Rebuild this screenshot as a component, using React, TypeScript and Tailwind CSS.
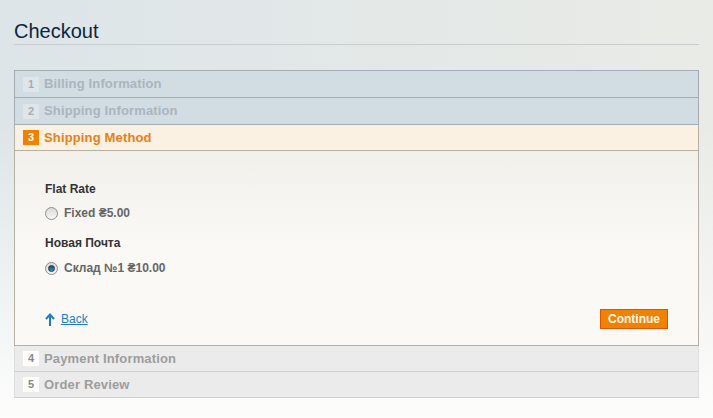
const font = { fontFamily: '"Liberation Sans", "DejaVu Sans", Arial, sans-serif' }

type Step = { n: number; title: string }

const done: Step[] = [
  { n: 1, title: 'Billing Information' },
  { n: 2, title: 'Shipping Information' },
]

const todo: Step[] = [
  { n: 4, title: 'Payment Information' },
  { n: 5, title: 'Order Review' },
]

function Radio({ checked }: { checked?: boolean }) {
  return (
    <span className="w-[13px] h-[13px] rounded-full border border-[#8f8f8f] bg-gradient-to-b from-[#d9d9d9] to-[#f7f7f7] flex items-center justify-center shrink-0">
      {checked && (
        <span className="w-[7px] h-[7px] rounded-full bg-gradient-to-b from-[#1b4f6b] to-[#3d8fb8] border border-[#143a52]" />
      )}
    </span>
  )
}

export default function App() {
  return (
    <div style={font} className="w-[713px] h-[418px] overflow-hidden bg-gradient-to-r from-[#dde5e9] to-[#e9ebe6]">
      <div className="h-full px-[14px] bg-gradient-to-b from-transparent via-transparent via-30% to-[#fdfdfc]">
        {/* Page title */}
        <div className="pt-[19px] pb-[1px] border-b border-[#c9cdcd]">
          <h1 className="text-[20px] leading-[24px] text-[#0a263c]">Checkout</h1>
        </div>

        {/* Steps */}
        <div className="mt-[25px]">
          {done.map((s, i) => (
            <div
              key={s.n}
              className={`h-[27px] flex items-center pl-[8px] bg-[#d1dce3] border-x border-b border-[#a5adb2] ${i === 0 ? 'border-t h-[28px]' : ''}`}
            >
              <span className="w-[16px] h-[15px] bg-[#dfe6ea] text-[#a3aeb5] text-[11px] font-bold flex items-center justify-center">
                {s.n}
              </span>
              <span className="ml-[5px] text-[13px] tracking-[0.15px] font-bold text-[#a9b5be]">{s.title}</span>
            </div>
          ))}

          {/* Active step */}
          <div className="h-[26px] flex items-center pl-[8px] bg-[#faf1e2] border-x border-b border-[#b8afa4]">
            <span className="w-[16px] h-[15px] bg-[#f18200] text-white text-[11px] font-bold flex items-center justify-center">
              3
            </span>
            <span className="ml-[5px] text-[13px] tracking-[0.15px] font-bold text-[#e97e1b]">Shipping Method</span>
          </div>

          <div className="border-x border-b border-[#b8afa4] bg-gradient-to-b from-[#f2f0eb] via-[#faf9f6] to-[#faf9f6] px-[30px] pt-[30px] pb-[16px] h-[195px] flex flex-col">
            <p className="text-[12px] leading-[16px] font-bold text-[#333]">Flat Rate</p>
            <label className="mt-[8px] h-[16px] flex items-center gap-[6px] text-[12px] font-bold text-[#666]">
              <Radio />
              Fixed ₴5.00
            </label>
            <p className="mt-[14px] text-[12px] leading-[16px] font-bold text-[#333]">Новая Почта</p>
            <label className="mt-[9px] h-[16px] flex items-center gap-[6px] text-[12px] font-bold text-[#666]">
              <Radio checked />
              Склад №1 ₴10.00
            </label>

            <div className="mt-[33px] h-[20px] flex items-center justify-between">
              <a className="flex items-center gap-[6px] text-[12px] text-[#1e7ec8] cursor-pointer">
                <svg width="10" height="13" viewBox="0 0 10 13" fill="none" stroke="#1e7ec8" strokeWidth={2}>
                  <path d="M5 13V2" />
                  <path d="M1 6l4-4.5L9 6" strokeLinejoin="miter" />
                </svg>
                <span className="underline">Back</span>
              </a>
              <button className="w-[68px] h-[20px] bg-[#f18200] border border-[#de5400] text-[12px] font-bold text-[#fff8ee] flex items-center justify-center">
                Continue
              </button>
            </div>
          </div>

          {todo.map((s) => (
            <div
              key={s.n}
              className="h-[26px] flex items-center pl-[8px] bg-[#ebebeb] border-x border-x-[#dedede] border-b border-b-[#cfcfcf]"
            >
              <span className="w-[16px] h-[15px] bg-white text-[#888] text-[11px] font-bold flex items-center justify-center">
                {s.n}
              </span>
              <span className="ml-[5px] text-[13px] tracking-[0.15px] font-bold text-[#9d9d9d]">{s.title}</span>
            </div>
          ))}
        </div>
      </div>
    </div>
  )
}
